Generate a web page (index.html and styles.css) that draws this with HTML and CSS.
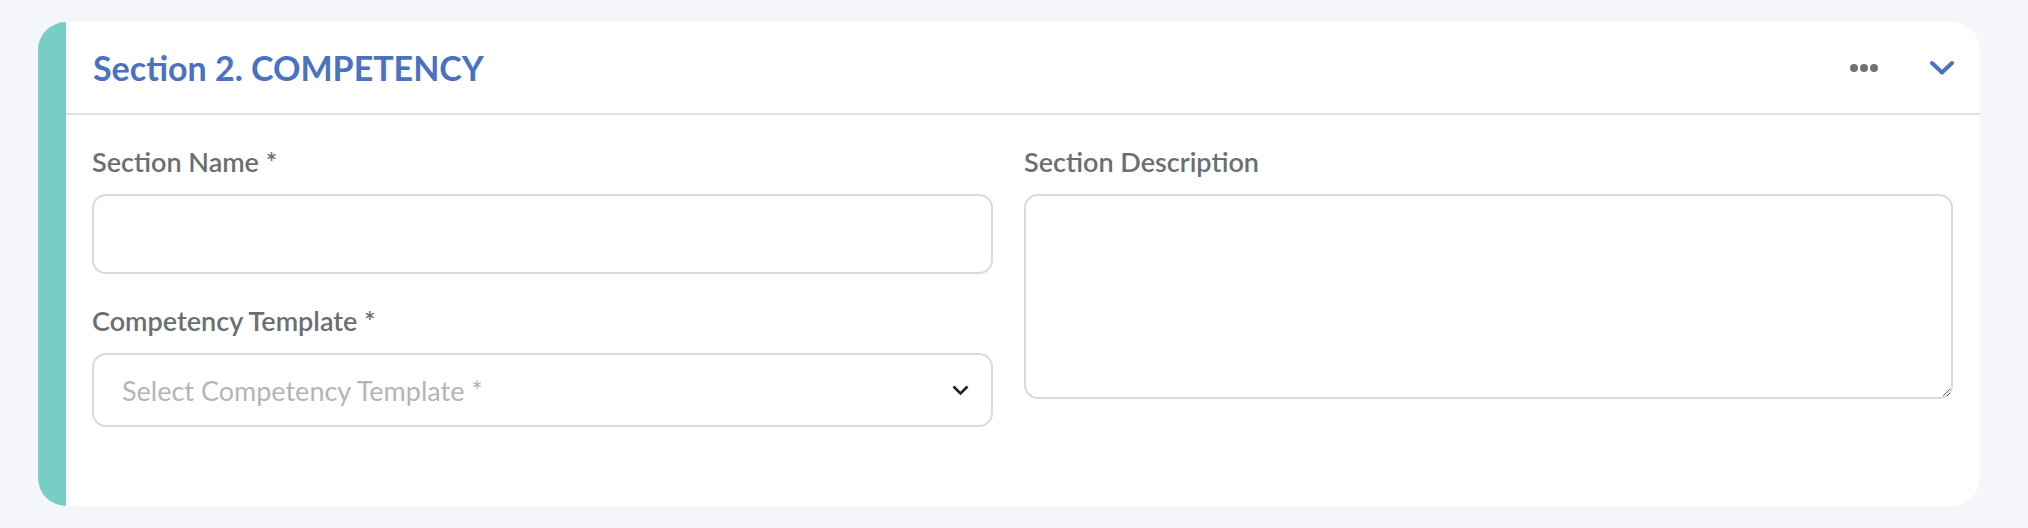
FILE: index.html
```html
<!DOCTYPE html>
<html lang="en">
<head>
<meta charset="utf-8">
<title>Section 2. COMPETENCY</title>
<link rel="stylesheet" href="styles.css">
</head>
<body>
<div class="page">
  <section class="card">
    <header class="card-header">
      <h2 class="card-title">Section 2. COMPETENCY</h2>
      <div class="card-actions">
        <button class="icon-btn" type="button" aria-label="More">
          <svg width="28" height="8" viewBox="0 0 28 8"><circle cx="4" cy="4" r="4" fill="#6f7378"/><circle cx="14" cy="4" r="4" fill="#6f7378"/><circle cx="24" cy="4" r="4" fill="#6f7378"/></svg>
        </button>
        <button class="icon-btn" type="button" aria-label="Collapse">
          <svg width="26" height="16" viewBox="0 0 26 16"><path d="M3 3 L13 12.5 L23 3" fill="none" stroke="#4a72c0" stroke-width="4" stroke-linecap="round" stroke-linejoin="round"/></svg>
        </button>
      </div>
    </header>
    <div class="card-body">
      <div class="col">
        <div class="field">
          <label class="field-label">Section Name *</label>
          <input class="input" type="text">
        </div>
        <div class="field">
          <label class="field-label">Competency Template *</label>
          <div class="select">
            <span class="select-placeholder">Select Competency Template *</span>
            <svg width="17" height="10" viewBox="0 0 17 10"><path d="M1.5 1.5 L8.5 8.5 L15.5 1.5" fill="none" stroke="#222" stroke-width="2.6"/></svg>
          </div>
        </div>
      </div>
      <div class="col">
        <div class="field">
          <label class="field-label">Section Description</label>
          <textarea class="textarea"></textarea>
        </div>
      </div>
    </div>
  </section>
</div>
</body>
</html>
```
FILE: styles.css
```css
html, body {
  margin: 0;
}
body {
  background: #f5f6fa;
  font-family: Lato, "Liberation Sans", sans-serif;
}
.page {
  padding: 22px 48px 22px 38px;
}
.card {
  background: #fff;
  border-left: 28px solid #78cdc6;
  border-radius: 28px;
}
.card-header {
  height: 91px;
  display: flex;
  align-items: center;
  justify-content: space-between;
  padding: 0 25px 0 27px;
  border-bottom: 2px solid #dfe3e8;
}
.card-title {
  margin: 0;
  font-size: 34px;
  font-weight: 700;
  line-height: 1;
  color: #4a72c0;
}
.card-actions {
  display: flex;
  align-items: center;
  gap: 51px;
}
.icon-btn {
  background: none;
  border: 0;
  padding: 0;
  display: flex;
  cursor: pointer;
}
.card-body {
  display: grid;
  grid-template-columns: 901fr 929fr;
  column-gap: 31px;
  padding: 29px 27px 79px 26px;
}
.field {
  display: flex;
  flex-direction: column;
}
.field + .field {
  margin-top: 29px;
}
.field-label {
  font-size: 27px;
  font-weight: 600;
  line-height: 36px;
  color: #6a6f74;
  margin-bottom: 14px;
}
.input,
.select,
.textarea {
  box-sizing: border-box;
  border: 2px solid #d6dbde;
  border-radius: 14px;
  background: #fff;
  font: inherit;
  outline: none;
}
.input {
  height: 80px;
}
.select {
  height: 74px;
  display: flex;
  align-items: center;
  justify-content: space-between;
  padding: 0 22px 0 28px;
}
.select-placeholder {
  font-size: 27px;
  font-weight: 400;
  color: #b2b5b9;
}
.textarea {
  display: block;
  width: 100%;
  height: 205px;
  resize: vertical;
}
```
